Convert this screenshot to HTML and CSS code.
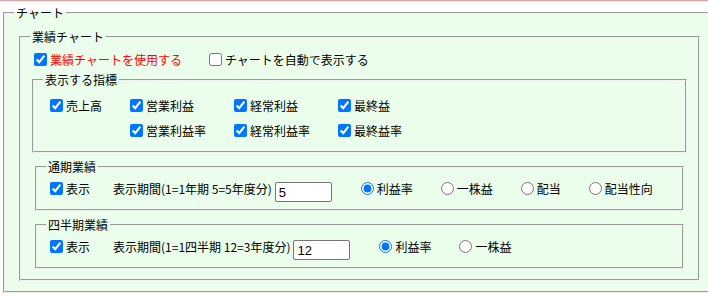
FILE: index.html
```html
<!DOCTYPE html>
<html lang="ja">
<head>
  <meta charset="UTF-8">
  <title>チャート設定</title>
  <link rel="stylesheet" href="styles.css">
</head>
<body>
  <div class="topline"></div>

  <fieldset class="box box-chart">
    <legend>チャート</legend>

    <fieldset class="box box-perf">
      <legend>業績チャート</legend>
      <div class="row">
        <label class="chk warn"><input type="checkbox" checked>業績チャートを使用する</label>
        <label class="chk gap"><input type="checkbox">チャートを自動で表示する</label>
      </div>

      <!-- 表示する指標 -->
      <fieldset class="box box-index">
        <legend>表示する指標</legend>
        <div class="index-grid">
          <label class="chk"><input type="checkbox" checked>売上高</label>
          <label class="chk"><input type="checkbox" checked>営業利益</label>
          <label class="chk"><input type="checkbox" checked>経常利益</label>
          <label class="chk"><input type="checkbox" checked>最終益</label>
          <span></span>
          <label class="chk"><input type="checkbox" checked>営業利益率</label>
          <label class="chk"><input type="checkbox" checked>経常利益率</label>
          <label class="chk"><input type="checkbox" checked>最終益率</label>
        </div>
      </fieldset>

      <!-- 通期 -->
      <fieldset class="box box-term">
        <legend>通期業績</legend>
        <div class="row row-term">
          <label class="chk"><input type="checkbox" checked>表示</label>
          <label class="period gap">表示期間(1=1年期 5=5年度分)<input type="text" value="5"></label>
          <label class="rad gap-r"><input type="radio" name="year" checked>利益率</label>
          <label class="rad gap"><input type="radio" name="year">一株益</label>
          <label class="rad gap"><input type="radio" name="year">配当</label>
          <label class="rad gap"><input type="radio" name="year">配当性向</label>
        </div>
      </fieldset>

      <!-- 四半期 -->
      <fieldset class="box box-term">
        <legend>四半期業績</legend>
        <div class="row row-term">
          <label class="chk"><input type="checkbox" checked>表示</label>
          <label class="period gap">表示期間(1=1四半期 12=3年度分)<input type="text" value="12"></label>
          <label class="rad gap-r"><input type="radio" name="quarter" checked>利益率</label>
          <label class="rad gap"><input type="radio" name="quarter">一株益</label>
        </div>
      </fieldset>
    </fieldset>
  </fieldset>
</body>
</html>
```

FILE: styles.css
```css
/* Grundlayout */
html, body {
  margin: 0;
  padding: 0;
  overflow: hidden;
  background: #fff;
}
body {
  font-family: "Noto Sans CJK JP", "Noto Sans", sans-serif;
  font-size: 12px;
  line-height: 17px;
  color: #000;
}

/* Linie vom Block darüber */
.topline {
  height: 1px;
  background: #d4aaaa;
  border-bottom: 1px solid #eee4e4;
}

/* Fieldsets */
.box {
  background: #ebfeeb;
  min-width: 0;
}
.box legend {
  padding: 0 2px;
  line-height: 17px;
}
.box-chart {
  margin: 2px -8px 0 3px;
  padding: 7px 9px 10px;
}
.box-perf {
  margin: 0 5px;
  padding: 5px 9px 5px;
}
.box-index {
  margin: 2px 2px 0;
  padding: 5px 9px 8px;
}
.box-term {
  margin: 5px;
  padding: 0 9px 7px;
}

/* Zeilen */
.row {
  display: flex;
  align-items: center;
  min-height: 19px;
}
.gap { margin-left: 23px; }
.gap-r { margin-left: 24px; }

.chk, .rad, .period {
  display: inline-flex;
  align-items: center;
  white-space: nowrap;
}
.chk input {
  width: 13px;
  height: 13px;
  margin: 0 3px 0 4px;
}
.rad input {
  width: 13px;
  height: 13px;
  margin: 0 3px 0 5px;
}
.warn { color: #f00; }

/* Kennzahlen-Raster */
.index-grid {
  display: grid;
  grid-template-columns: 80px 104px 104px auto;
  grid-auto-rows: 25px;
  align-items: center;
  margin-left: 3px;
}

/* Eingabefeld Zeitraum */
.period input {
  box-sizing: border-box;
  width: 57px;
  height: 20px;
  margin: 7px 0 0 3px;
  padding: 0 3px;
  border: 1px solid #767676;
  border-radius: 2px;
  font-family: "Liberation Sans", Arial, sans-serif;
  font-size: 13px;
  color: #000;
  background: #fff;
}
```
